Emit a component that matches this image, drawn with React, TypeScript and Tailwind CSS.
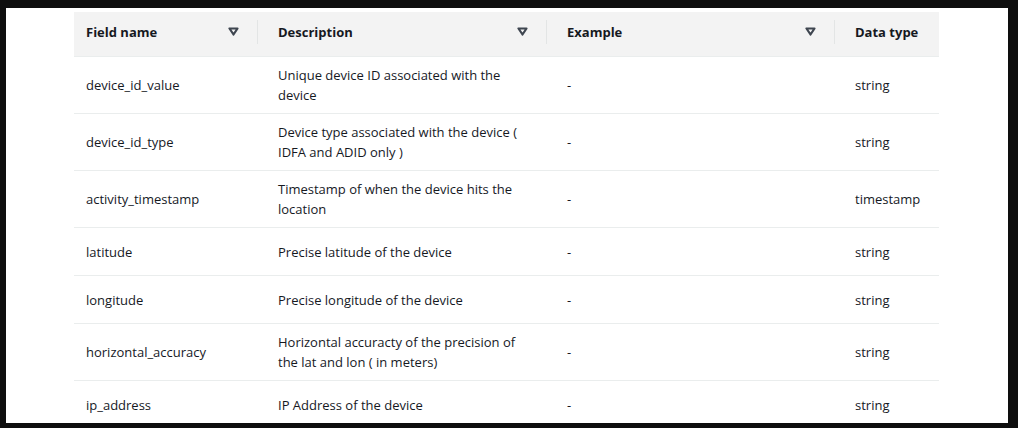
const rows = [
  { field: 'device_id_value', desc: 'Unique device ID associated with the device', type: 'string' },
  { field: 'device_id_type', desc: 'Device type associated with the device ( IDFA and ADID only )', type: 'string' },
  { field: 'activity_timestamp', desc: 'Timestamp of when the device hits the location', type: 'timestamp' },
  { field: 'latitude', desc: 'Precise latitude of the device', type: 'string' },
  { field: 'longitude', desc: 'Precise longitude of the device', type: 'string' },
  { field: 'horizontal_accuracy', desc: 'Horizontal accuracty of the precision of the lat and lon ( in meters)', type: 'string' },
  { field: 'ip_address', desc: 'IP Address of the device', type: 'string' },
]

function SortIcon() {
  return (
    <svg width="11" height="9" viewBox="0 0 11 9" className="shrink-0">
      <path d="M1.5 1.5h8L5.5 7.5z" fill="none" stroke="#3f4650" strokeWidth="2.2" strokeLinejoin="round" />
    </svg>
  )
}

function HeaderCell({ label, sortable = true }: { label: string; sortable?: boolean }) {
  return (
    <div className="flex items-center h-[44px] pb-[5px] pl-[12px] pr-[8px]">
      <span className="font-bold">{label}</span>
      {sortable && (
        <>
          <div className="flex-1" />
          <SortIcon />
          <div className="ml-[18px] w-px h-[24px] bg-[#e3e5e5]" />
        </>
      )}
    </div>
  )
}

const grid = 'grid grid-cols-[192px_289px_288px_96px]'

export default function App() {
  return (
    <div className="w-[1018px] h-[428px] bg-[#0e0e0e] pt-[8px] pl-[6px] pr-[10px] pb-[5px] font-['Open_Sans',sans-serif] text-[13px] leading-[20px] text-[#16191f]">
      <div className="w-full h-full bg-white overflow-hidden pt-[4px] pl-[68px]">
        <div className="w-[865px]">
          <div className={`${grid} bg-[#f3f3f3] border-b border-[#eaeded]`}>
            <HeaderCell label="Field name" />
            <HeaderCell label="Description" />
            <HeaderCell label="Example" />
            <HeaderCell label="Data type" sortable={false} />
          </div>
          {rows.map((r) => (
            <div key={r.field} className={`${grid} border-b border-[#eaeded] min-h-[48px] py-[8px] items-center`}>
              <div className="pl-[12px]">{r.field}</div>
              <div className="pl-[12px] pr-[30px]">{r.desc}</div>
              <div className="pl-[12px]">-</div>
              <div className="pl-[12px]">{r.type}</div>
            </div>
          ))}
        </div>
      </div>
    </div>
  )
}
